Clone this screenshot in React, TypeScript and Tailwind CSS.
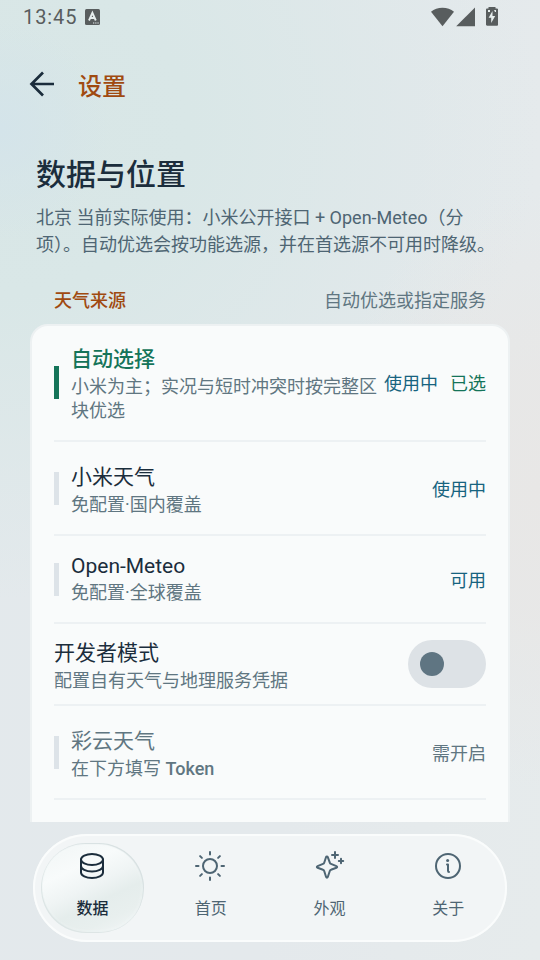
import type { ReactNode } from "react";
import clsx from "clsx";

type Source = {
  name: string;
  note: ReactNode;
  using?: string;
  status?: string;
  selected?: boolean;
  disabled?: boolean;
  height: string;
  leading?: string;
};

const publicSources: Source[] = [
  {
    name: "自动选择",
    note: "小米为主；实况与短时冲突时按完整区块优选",
    using: "使用中",
    status: "已选",
    selected: true,
    height: "h-[116px]",
  },
  { name: "小米天气", note: "免配置·国内覆盖", using: "使用中", height: "h-[94px]" },
  {
    name: "Open-Meteo",
    note: "免配置·全球覆盖",
    using: "可用",
    height: "h-[88px]",
    leading: "mb-0.5 leading-[23px]",
  },
];

const tokenSources: Source[] = [
  {
    name: "彩云天气",
    note: (
      <>
        在下方填写 <span className="font-medium">Token</span>
      </>
    ),
    status: "需开启",
    disabled: true,
    height: "h-[94px]",
  },
];

function StatusBar() {
  return (
    <div className="flex h-[34px] shrink-0 items-center pr-[42px] pl-[23px] text-[#585d5e]">
      <span className="text-[20px] leading-[34px] tracking-[0.9px]">13:45</span>
      <svg className="ml-2" width="15" height="16" viewBox="0 0 15 16">
        <rect width="15" height="16" rx="1.5" fill="currentColor" />
        <path d="M4 11.500 7.400 3.800 10.800 11.500M5.200 9h4.400" fill="none" stroke="#e6eeee" strokeWidth="1.9" />
        <path d="M8 14h1.300M10.200 14h1.300M12.400 14h1.300" stroke="#e6eeee" strokeWidth="1.200" />
      </svg>
      <svg className="ml-auto" width="67" height="20" viewBox="0 0 67 20" fill="currentColor">
        <path d="M0 4.800C3.200 2.200 7 .8 11.500.8S19.800 2.200 23 4.800L11.500 19.200z" />
        <path d="M44 .5V19.200H25.200z" />
        <path d="M57.500 0h7v1.400h1.500c.7 0 1.200.5 1.200 1.200V17.600c0 .7-.5 1.200-1.200 1.200H56.200c-.7 0-1.200-.5-1.200-1.200V2.600c0-.7.5-1.200 1.200-1.200h1.300z" />
        <path d="M61.500 4v5h2.700l-4 7V10.800h-2.600z" fill="#e6eeee" />
        <path d="M57 3h2v2h-2zM63 3h2v2h-1z" fill="#e6eeee" />
      </svg>
    </div>
  );
}

function SourceRow({ source }: { source: Source }) {
  return (
    <li
      className={clsx(
        "flex items-center border-b-2 border-[#edf1f3]",
        source.height,
      )}
    >
      <span
        className={clsx(
          "mr-3 h-[33px] w-[5px] shrink-0",
          source.selected ? "-mt-px bg-[#157459]" : "bg-[#dde3e8]",
        )}
      />
      <div className={clsx("min-w-0 flex-1", source.selected ? "pt-px" : "pt-0.5")}>
        <h3
          className={clsx("text-[21px]", source.leading ?? "leading-[30px]", {
            "font-medium text-[#157459]": source.selected,
            "text-[#607681]": source.disabled,
            "text-[#1b2d3c]": !source.selected && !source.disabled,
          })}
        >
          {source.name}
        </h3>
        <p className="pt-px text-[18px] leading-6 text-[#607681]">{source.note}</p>
      </div>
      <div
        className={clsx(
          "flex shrink-0 gap-3 pl-1.5 text-[18px] leading-6",
          source.selected ? "pt-0.5" : "pt-1",
        )}
      >
        {source.using && <span className="text-[#17637f]">{source.using}</span>}
        {source.status && (
          <span className={source.disabled ? "text-[#607681]" : "text-[#157459]"}>
            {source.status}
          </span>
        )}
      </div>
    </li>
  );
}

function DeveloperRow() {
  return (
    <li className="flex h-[82px] items-center justify-between border-b-2 border-[#edf1f3]">
      <div className="pt-0.5">
        <h3 className="text-[21px] leading-[30px] text-[#1b2d3c]">开发者模式</h3>
        <p className="pt-px text-[18px] leading-6 text-[#607681]">配置自有天气与地理服务凭据</p>
      </div>
      <button
        role="switch"
        aria-checked="false"
        aria-label="开发者模式"
        className="flex h-12 w-[78px] items-center rounded-full bg-[#dde2e6] px-3"
      >
        <span className="size-6 rounded-full bg-[#5f7582]" />
      </button>
    </li>
  );
}

function Icon({ children }: { children: ReactNode }) {
  return (
    <svg
      width="32"
      height="32"
      viewBox="0 0 32 32"
      fill="none"
      stroke="currentColor"
      strokeWidth="2"
      strokeLinecap="round"
      strokeLinejoin="round"
    >
      {children}
    </svg>
  );
}

const tabs = [
  {
    label: "数据",
    icon: (
      <Icon>
        <ellipse cx="16" cy="9.500" rx="11" ry="5.500" />
        <path d="M5 9.500v13c0 3 4.900 5.500 11 5.500s11-2.500 11-5.500v-13" />
        <path d="M5 16c0 3 4.900 5.500 11 5.500s11-2.500 11-5.500" />
      </Icon>
    ),
  },
  {
    label: "首页",
    icon: (
      <Icon>
        <circle cx="16" cy="16" r="7" />
        <path d="M16 2v2.500M16 27.500V30M2 16h2.500M27.500 16H30M6.100 6.100l1.800 1.800M24.100 24.100l1.800 1.800M6.100 25.900l1.800-1.800M24.100 7.900l1.800-1.800" />
      </Icon>
    ),
  },
  {
    label: "外观",
    icon: (
      <Icon>
        <path d="M14.800 7.200c-.4-1-1.400-1-1.800 0l-1.800 5.500c-.2.600-.6 1-1.200 1.200l-5.400 2.200c-1 .4-1 1.300 0 1.700l5.400 2c.6.200 1 .6 1.200 1.200l1.900 6c.4 1 1.300 1 1.700 0l2-6c.2-.6.6-1 1.200-1.200l5.400-2c1-.4 1-1.300 0-1.700l-5.400-2.200c-.6-.2-1-.6-1.200-1.200z" />
        <path d="M22 2v6M19 5h6M28 8.800v4.400M25.800 11h4.400" />
      </Icon>
    ),
  },
  {
    label: "关于",
    icon: (
      <Icon>
        <circle cx="16" cy="16" r="12" />
        <path d="M15 14.500h1v6.200c0 .7.300 1.200 1 1.200" />
        <circle cx="15.600" cy="10.500" r="1.500" fill="currentColor" stroke="none" />
      </Icon>
    ),
  },
];

function TabBar() {
  return (
    <nav className="mx-[33px] mt-3 mb-[18px] grid h-[108px] shrink-0 grid-cols-[118px_118.5px_119px_118.5px] rounded-full bg-[#f2f5f6] inset-ring-2 inset-ring-[#fafcfc]">
      {tabs.map((tab, key) => (
        <div key={tab.label} className="flex items-center justify-center">
          <a
            className={clsx(
              "flex h-[90px] w-[103px] flex-col items-center rounded-[46px] pt-[7px] text-[16px]",
              key === 0
                ? "bg-[linear-gradient(155deg,#f0f5f5_0%,#f8fbfb_30%,#eff4f4_48%,#e5edec_62%,#e8efee_78%,#f4f7f8_100%)] font-medium text-[#1b2d3c] shadow-[inset_-1px_1px_1px_#d6dfe0,inset_1px_-1px_1px_#dbe4e4,inset_0_0_4px_#f6fafa]"
                : "text-[#4e6573]",
            )}
          >
            {tab.icon}
            <span className="mt-[15px] pl-px leading-6">{tab.label}</span>
          </a>
        </div>
      ))}
    </nav>
  );
}

export default function App() {
  return (
    <div
      lang="zh-CN"
      className="flex h-[960px] w-[540px] flex-col overflow-hidden bg-[radial-gradient(circle_at_0px_130px,#d4e4ea_0px,#d4e4ea00_110px),radial-gradient(ellipse_220px_300px_at_540px_490px,#e8e7e6_0%,#e8e7e6cc_40%,#e8e7e600_100%),radial-gradient(ellipse_540px_470px_at_0px_130px,#d8e6e6_0%,#d9e7e7_35%,#d9e7e700_100%),linear-gradient(100deg,#e3e9ec,#e4e9ec_60%,#e6ebec)] font-[Roboto,'Noto_Sans_CJK_SC',sans-serif]"
    >
      <StatusBar />
      <header className="flex h-[102px] shrink-0 items-center pl-[29px]">
        <svg className="-mt-0.5" width="26" height="26" viewBox="0 0 26 26" fill="none" stroke="#1b2d3c" strokeWidth="2.700">
          <path d="M25 13H2.500M14 1.500 2.500 13 14 24.500" />
        </svg>
        <h1 className="ml-[23px] pt-[3px] text-[24px] leading-9 font-medium text-[#a04a10]">设置</h1>
      </header>
      <main className="flex min-h-0 flex-1 flex-col overflow-hidden px-[30px]">
        <div className="px-1.5 pt-[17px]">
          <h2 className="text-[30px] leading-11 font-medium text-[#1b2d3c]">数据与位置</h2>
          <p className="mt-[7px] text-[18px] leading-[27px] whitespace-nowrap text-[#4e6573]">
            北京 当前实际使用：小米公开接口 + Open-Meteo（分
            <br />
            项）。自动优选会按功能选源，并在首选源不可用时降级。
          </p>
        </div>
        <div className="flex justify-between px-6 pt-[31px] pb-[11px] text-[18px] leading-6">
          <h3 className="font-medium text-[#a04a10]">天气来源</h3>
          <span className="text-[#607681]">自动优选或指定服务</span>
        </div>
        <ul className="h-[600px] shrink-0 rounded-[18px] border-2 border-[#edf1f2] bg-[#f9fbfb] px-[22px]">
          {publicSources.map((source) => (
            <SourceRow key={source.name} source={source} />
          ))}
          <DeveloperRow />
          {tokenSources.map((source) => (
            <SourceRow key={source.name} source={source} />
          ))}
        </ul>
      </main>
      <TabBar />
    </div>
  );
}
